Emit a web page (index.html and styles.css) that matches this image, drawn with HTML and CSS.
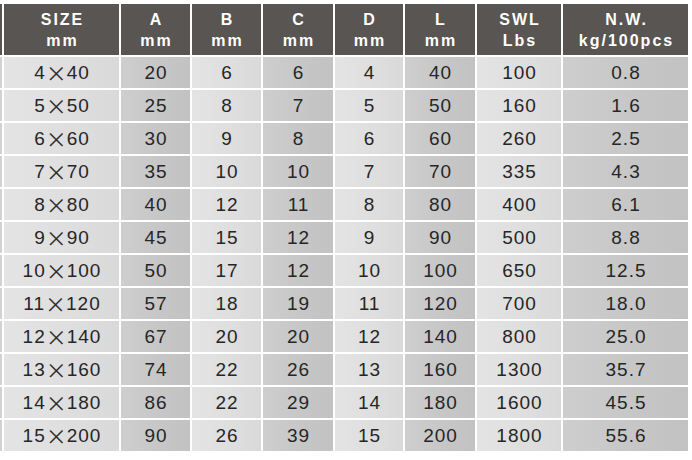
FILE: index.html
```html
<!DOCTYPE html>
<html>
<head>
<meta charset="utf-8">
<link rel="stylesheet" href="styles.css">
</head>
<body>
<div class="spec">
  <div class="edge hd"></div>
  <div class="hd">SIZE<br>mm</div>
  <div class="hd">A<br>mm</div>
  <div class="hd">B<br>mm</div>
  <div class="hd">C<br>mm</div>
  <div class="hd">D<br>mm</div>
  <div class="hd">L<br>mm</div>
  <div class="hd">SWL<br>Lbs</div>
  <div class="hd">N.W.<br>kg/100pcs</div>

  <div class="edge"></div><div class="c lt">4<span class="x">×</span>40</div><div class="c dk">20</div><div class="c lt">6</div><div class="c dk">6</div><div class="c lt">4</div><div class="c dk">40</div><div class="c lt">100</div><div class="c dk">0.8</div>
  <div class="edge"></div><div class="c lt">5<span class="x">×</span>50</div><div class="c dk">25</div><div class="c lt">8</div><div class="c dk">7</div><div class="c lt">5</div><div class="c dk">50</div><div class="c lt">160</div><div class="c dk">1.6</div>
  <div class="edge"></div><div class="c lt">6<span class="x">×</span>60</div><div class="c dk">30</div><div class="c lt">9</div><div class="c dk">8</div><div class="c lt">6</div><div class="c dk">60</div><div class="c lt">260</div><div class="c dk">2.5</div>
  <div class="edge"></div><div class="c lt">7<span class="x">×</span>70</div><div class="c dk">35</div><div class="c lt">10</div><div class="c dk">10</div><div class="c lt">7</div><div class="c dk">70</div><div class="c lt">335</div><div class="c dk">4.3</div>
  <div class="edge"></div><div class="c lt">8<span class="x">×</span>80</div><div class="c dk">40</div><div class="c lt">12</div><div class="c dk">11</div><div class="c lt">8</div><div class="c dk">80</div><div class="c lt">400</div><div class="c dk">6.1</div>
  <div class="edge"></div><div class="c lt">9<span class="x">×</span>90</div><div class="c dk">45</div><div class="c lt">15</div><div class="c dk">12</div><div class="c lt">9</div><div class="c dk">90</div><div class="c lt">500</div><div class="c dk">8.8</div>
  <div class="edge"></div><div class="c lt">10<span class="x">×</span>100</div><div class="c dk">50</div><div class="c lt">17</div><div class="c dk">12</div><div class="c lt">10</div><div class="c dk">100</div><div class="c lt">650</div><div class="c dk">12.5</div>
  <div class="edge"></div><div class="c lt">11<span class="x">×</span>120</div><div class="c dk">57</div><div class="c lt">18</div><div class="c dk">19</div><div class="c lt">11</div><div class="c dk">120</div><div class="c lt">700</div><div class="c dk">18.0</div>
  <div class="edge"></div><div class="c lt">12<span class="x">×</span>140</div><div class="c dk">67</div><div class="c lt">20</div><div class="c dk">20</div><div class="c lt">12</div><div class="c dk">140</div><div class="c lt">800</div><div class="c dk">25.0</div>
  <div class="edge"></div><div class="c lt">13<span class="x">×</span>160</div><div class="c dk">74</div><div class="c lt">22</div><div class="c dk">26</div><div class="c lt">13</div><div class="c dk">160</div><div class="c lt">1300</div><div class="c dk">35.7</div>
  <div class="edge"></div><div class="c lt">14<span class="x">×</span>180</div><div class="c dk">86</div><div class="c lt">22</div><div class="c dk">29</div><div class="c lt">14</div><div class="c dk">180</div><div class="c lt">1600</div><div class="c dk">45.5</div>
  <div class="edge"></div><div class="c lt">15<span class="x">×</span>200</div><div class="c dk">90</div><div class="c lt">26</div><div class="c dk">39</div><div class="c lt">15</div><div class="c dk">200</div><div class="c lt">1800</div><div class="c dk">55.6</div>
</div>
</body>
</html>
```
FILE: styles.css
```css
html, body {
  margin: 0;
  padding: 0;
  background: #ffffff;
}

.spec {
  display: grid;
  grid-template-columns: 2px 115px 69px 69px 70px 68px 70px 84px 125px;
  grid-template-rows: 51px repeat(12, 31px);
  gap: 2px;
  margin-top: 4px;
  font-family: "Liberation Sans", Arial, sans-serif;
}

.hd {
  background: #595553;
  color: #ffffff;
  font-weight: bold;
  font-size: 16px;
  line-height: 21px;
  letter-spacing: 2px;
  padding-left: 2px;
  display: flex;
  flex-direction: column;
  align-items: center;
  justify-content: center;
  text-align: center;
}

.edge {
  background: #d2d2d2;
}

.edge.hd {
  background: #595553;
  padding: 0;
}

.c {
  display: flex;
  align-items: center;
  justify-content: center;
  color: #262626;
  font-size: 19px;
  letter-spacing: 1px;
  padding-left: 1px;
  white-space: nowrap;
}

.lt {
  background: linear-gradient(to right, #e4e4e4, #dedede 60%, #d9d9d9);
}

.dk {
  background: linear-gradient(to right, #cecece, #c6c6c6 60%, #c2c2c2);
}

.x {
  display: inline-block;
  width: 20px;
  text-align: center;
  font-family: "Noto Sans CJK SC", "Noto Sans CJK JP", sans-serif;
  font-size: 21px;
  font-weight: normal;
  letter-spacing: 0;
  line-height: 1;
  margin-right: 1px;
  color: #2e2e2e;
}
```
